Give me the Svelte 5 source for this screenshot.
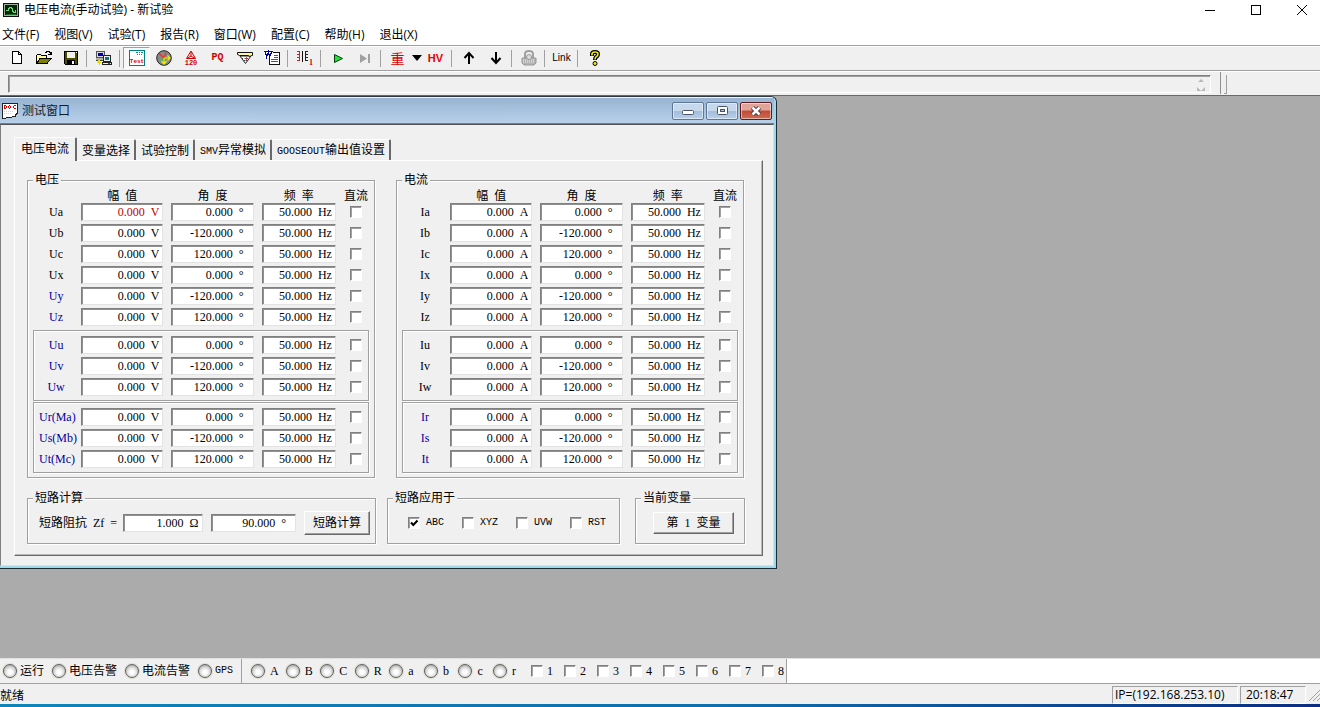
<script>
  const menus = ['文件(F)', '视图(V)', '试验(T)', '报告(R)', '窗口(W)', '配置(C)', '帮助(H)', '退出(X)'];
  const tabs = [
    { latin: '', text: '电压电流' },
    { latin: '', text: '变量选择' },
    { latin: '', text: '试验控制' },
    { latin: 'SMV', text: '异常模拟' },
    { latin: 'GOOSEOUT', text: '输出值设置' }
  ];
  const angles = ['0.000', '-120.000', '120.000'];
  const sp = '\u2002';

  function channels(names, unit, blueNames) {
    return names.map((name, i) => ({
      name,
      unit,
      angle: angles[i % 3],
      blue: blueNames.includes(name)
    }));
  }

  const panels = [
    {
      title: '电压',
      groups: [
        ['Ua', 'Ub', 'Uc', 'Ux', 'Uy', 'Uz'],
        ['Uu', 'Uv', 'Uw'],
        ['Ur(Ma)', 'Us(Mb)', 'Ut(Mc)']
      ].map((g) => channels(g, 'V', ['Uy', 'Uz', 'Uu', 'Uv', 'Uw', 'Ur(Ma)', 'Us(Mb)', 'Ut(Mc)']))
    },
    {
      title: '电流',
      groups: [
        ['Ia', 'Ib', 'Ic', 'Ix', 'Iy', 'Iz'],
        ['Iu', 'Iv', 'Iw'],
        ['Ir', 'Is', 'It']
      ].map((g) => channels(g, 'A', ['Ir', 'Is', 'It']))
    }
  ];

  const applied = [
    { name: 'ABC', on: true },
    { name: 'XYZ', on: false },
    { name: 'UVW', on: false },
    { name: 'RST', on: false }
  ];
  const alarms = ['运行', '电压告警', '电流告警', 'GPS'];
  const phases = ['A', 'B', 'C', 'R', 'a', 'b', 'c', 'r'];
  const inputs = [1, 2, 3, 4, 5, 6, 7, 8];
</script>

<div class="app">
  <header class="titlebar">
    <svg class="logo" viewBox="0 0 16 16" shape-rendering="crispEdges" aria-hidden="true">
      <rect x="0" y="1" width="16" height="14" rx="1" fill="#111" />
      <rect x="1" y="2" width="14" height="12" fill="#9fb09f" />
      <rect x="2" y="3" width="12" height="10" fill="#06240a" />
      <path d="M3 8h2V6h1V5h2v1h1v3h1v1h2V8h1" fill="none" stroke="#5be070" />
      <path d="M3 12h10" stroke="#1d6b2a" />
    </svg>
    <span class="caption">电压电流(手动试验) - 新试验</span>
    <div class="winbtns">
      <button aria-label="最小化"><svg viewBox="0 0 12 12" shape-rendering="crispEdges"><path d="M1 6.500h10" stroke="#000" /></svg></button>
      <button aria-label="最大化"><svg viewBox="0 0 12 12" shape-rendering="crispEdges"><rect x="1.500" y="1.500" width="9" height="9" fill="none" stroke="#000" /></svg></button>
      <button aria-label="关闭"><svg viewBox="0 0 12 12"><path d="M1 1l10 10M11 1L1 11" stroke="#000" /></svg></button>
    </div>
  </header>

  <nav class="menu">
    {#each menus as m}<button>{m}</button>{/each}
  </nav>

  <div class="toolbar">
    <button aria-label="新建">
      <svg viewBox="0 0 16 16" shape-rendering="crispEdges"><path d="M3.500 1.500h6l3 3v9h-9z" fill="#fff" stroke="#000" /><path d="M9.500 1.500v3h3" fill="none" stroke="#000" /></svg>
    </button>
    <button aria-label="打开">
      <svg viewBox="0 0 16 16" shape-rendering="crispEdges"><path d="M.5 13.500v-8l1-1h3l1 1h5v3h-6z" fill="#ffff9a" stroke="#000" /><path d="M1 13.500l3-5h11l-4 5z" fill="#808000" stroke="#000" /><path d="M9 2.500h1v-1h3v1h1v2M12 4.500h3M15.500 2v3" fill="none" stroke="#000" /></svg>
    </button>
    <button aria-label="保存">
      <svg viewBox="0 0 16 16" shape-rendering="crispEdges"><path d="M1.500 1.500h13v13h-12l-1-1z" fill="#4d4d00" stroke="#000" /><path d="M4 2h8v6H4z" fill="#f0f0f0" /><path d="M4 10h8v4H4z" fill="#000" /><path d="M9 11h2v3H9zM13 2h1v1h-1z" fill="#fff" /></svg>
    </button>
    <i class="sep"></i>
    <button aria-label="联机">
      <svg viewBox="0 0 16 16" shape-rendering="crispEdges"><path d="M.5 1.500h8v6h-8z" fill="#d8d8d8" stroke="#555" /><path d="M2 3h5v3H2z" fill="#0000a8" /><path d="M0 8h8v2H0z" fill="#b0b0b0" /><path d="M0 10h7v1H0z" fill="#444" /><path d="M7.500 5.500h7v6h-7z" fill="#f0f0f0" stroke="#222" /><path d="M9 7h4v3H9z" fill="#007c80" /><path d="M6.500 12.500h9v2h-9z" fill="#eee" stroke="#222" /><path d="M12 13h2v1h-2z" fill="#008000" /><path d="M2 10h2v2h1v1H4v2H3v-2H1v-1h1z" fill="#e4dc00" /></svg>
    </button>
    <i class="sep"></i>
    <button class="pressed" aria-label="测试">
      <svg class="wide" viewBox="0 0 18 16"><path d="M1.500.500h15v15h-15z" fill="#fff" stroke="#008080" shape-rendering="crispEdges" /><path d="M8 2.500h2M11 2.500h1M13 2.500h2M9 4.500h1M11 4.500h1M13 4.500h1" stroke="#0090a0" shape-rendering="crispEdges" /><text x="9" y="13" text-anchor="middle" font-family="Liberation Mono" font-size="6" font-weight="700" fill="#e00000">Test</text></svg>
    </button>
    <button aria-label="矢量图">
      <svg viewBox="0 0 16 16"><circle cx="8" cy="8" r="7.300" fill="#888" stroke="#222" /><path d="M8 8L3 3.500M8 8l2-5.500" stroke="#f03030" stroke-width="1.400" fill="none" /><path d="M8 8v6M8 8h6M11.500 5.500L14 8l-2.500 2.500M5.500 11L8 14l2.500-3" stroke="#e8f000" stroke-width="1.200" fill="none" /><path d="M8 8l-5 3" stroke="#30d030" /></svg>
    </button>
    <button aria-label="120度">
      <svg viewBox="0 0 16 16"><path d="M8 1L3.500 8.500h9zM8 2v4M8 6L4 8.500M8 6l4 2.500" fill="none" stroke="#d00000" /><text x="8" y="15" text-anchor="middle" font-family="Liberation Mono" font-size="7" font-weight="700" fill="#d00000">120</text></svg>
    </button>
    <button aria-label="功率"><span class="pq">PQ</span></button>
    <button aria-label="阻抗图">
      <svg viewBox="0 0 16 16"><path d="M3 6l5.500 7.500L14 6z" fill="#fff" stroke="#222" /><path d="M.5 2.500h15v3h-1l-1.500 1-2-1H2.500L.5 4.500z" fill="#fff7a0" stroke="#111" /><path d="M5 8.500h2M8 8v3M10 8.500h2M7 10.500h3" stroke="#444" stroke-dasharray="1 1" /><path d="M9.500 7v3M8 8.500h3" stroke="#d02020" stroke-width=".8" /></svg>
    </button>
    <button aria-label="导出Word">
      <svg viewBox="0 0 16 16" shape-rendering="crispEdges"><path d="M5.500 2.500h10v12h-10z" fill="#fff" stroke="#111" /><path d="M10 5.500h4M10 7.500h4M7 9.500h7M7 11.500h7" stroke="#555" /><path d="M0 0h9v8H0z" fill="#fff" /><path d="M0 1.500h9" stroke="#000098" /><path d="M1.500 2l1 5 2-5 1 5 2-5" fill="none" stroke="#000098" stroke-width="1.200" /></svg>
    </button>
    <i class="sep"></i>
    <button aria-label="变比">
      <svg viewBox="0 0 18 16" class="wide" shape-rendering="crispEdges"><path d="M1 1.500h3M3.500 2v2M1 4.500h3M3.500 5v2M1 7.500h3M3.500 8v2M1 10.500h3" fill="none" stroke="#d02020" /><path d="M6.500 1v11" stroke="#111" /><path d="M9 1.500h3M9.500 2v2M9 4.500h3M9.500 5v2M9 7.500h3M9.500 8v2M9 10.500h3" fill="none" stroke="#222" /><text x="13" y="15" font-family="Liberation Serif" font-size="8" font-weight="700" fill="#d00000">1</text></svg>
    </button>
    <i class="sep"></i>
    <button aria-label="开始试验">
      <svg viewBox="0 0 16 16"><path d="M4.500 4.500v8l8-4z" fill="#22e03a" stroke="#063c0a" /></svg>
    </button>
    <button aria-label="单步" disabled>
      <svg viewBox="0 0 16 16"><path d="M3 4v9l7-4.500zM11 4h2v9h-2z" fill="#a0a0a0" /></svg>
    </button>
    <i class="sep"></i>
    <button class="red" aria-label="重复">重</button>
    <button class="drop" aria-label="更多">
      <svg viewBox="0 0 10 6"><path d="M0 0h10L5 6z" fill="#000" /></svg>
    </button>
    <button class="hv" aria-label="高压">HV</button>
    <i class="sep"></i>
    <button aria-label="上移">
      <svg viewBox="0 0 16 16"><path d="M8 14V4M3.500 8L8 3l4.500 5" fill="none" stroke="#000" stroke-width="2" /></svg>
    </button>
    <button aria-label="下移">
      <svg viewBox="0 0 16 16"><path d="M8 2v10M3.500 8L8 13l4.500-5" fill="none" stroke="#000" stroke-width="2" /></svg>
    </button>
    <i class="sep"></i>
    <button aria-label="锁定" disabled>
      <svg viewBox="0 0 16 16"><path d="M4 8V4q0-3 4-3t4 3v4" fill="none" stroke="#a0a0a0" stroke-width="2" /><path d="M1 8h14v5l-2 2H3l-2-2z" fill="#b4b4b4" stroke="#999" /><path d="M2 10h12M2 12h12" stroke="#eee" stroke-dasharray="1 1" /><circle cx="8" cy="7" r="2.500" fill="#ddd" stroke="#999" /></svg>
    </button>
    <i class="sep"></i>
    <button class="link">Link</button>
    <i class="sep"></i>
    <button aria-label="帮助">
      <svg viewBox="0 0 16 16"><path d="M5 6V4q0-2 3-2t3 2q0 2-2 3-1 1-1 3" fill="none" stroke="#000" stroke-width="4" /><path d="M5 5.500V4q0-2 3-2t3 2q0 2-2 3-1 1-1 2.500" fill="none" stroke="#f4ee00" stroke-width="1.600" /><circle cx="8" cy="13.500" r="2" fill="#f4ee00" stroke="#000" /></svg>
    </button>
  </div>

  <div class="rebar">
    <div class="message">
      <svg viewBox="0 0 10 14" aria-hidden="true"><path d="M2 4h6L5 1zM1 9l4 4 4-4v4H1z" fill="#b8b8b8" /></svg>
    </div>
    <i class="gripline"></i>
    <i class="grip"></i>
  </div>

  <main class="desktop">
    <section class="window">
      <header class="wintitle">
        <svg class="doc" viewBox="0 0 16 16" shape-rendering="crispEdges" aria-hidden="true">
          <path d="M.5.500h15v10l-2 1v2h-3l-1 1h-5l-1 1h-3z" fill="#fff" stroke="#222" />
          <path d="M2.500 2v4M3 2.500h1M4.500 3v2M3 5.500h1M6.500 3v2M7 2.500h1M7 5.500h1M8.500 3v2M11.500 3v2M12 2.500h2M12 5.500h2" stroke="#e00000" />
          <path d="M2 8.500h10M2 10.500h8" stroke="#ccc" stroke-dasharray="1 1" />
        </svg>
        <span>测试窗口</span>
        <div class="mdibtns">
          <button aria-label="最小化窗口"><svg viewBox="0 0 14 12"><rect x="1.500" y="5.500" width="11" height="4" rx="1" fill="#fff" stroke="#4c5566" /></svg></button>
          <button aria-label="最大化窗口"><svg viewBox="0 0 14 12"><rect x="2.500" y="1.500" width="10" height="8" rx="1" fill="#fff" stroke="#4c5566" /><rect x="5.500" y="4.500" width="4" height="2" fill="#a8c0dc" stroke="#4c5566" /></svg></button>
          <button class="close" aria-label="关闭窗口"><svg viewBox="0 0 14 12"><path d="M3.500 2.500l7 7M10.500 2.500l-7 7" stroke="#4a3038" stroke-width="4.500" /><path d="M3.500 2.500l7 7M10.500 2.500l-7 7" stroke="#fff" stroke-width="2.500" /></svg></button>
        </div>
      </header>

      <div class="winbody">
        <div class="tabs" role="tablist">
          {#each tabs as t, i}
            <button role="tab" aria-selected={i === 0} class:active={i === 0}>{#if t.latin}<span class="latin">{t.latin}</span>{/if}{t.text}</button>
          {/each}
        </div>

        <div class="sheet">
          <div class="quantities">
            {#each panels as p}
              <fieldset>
                <legend>{p.title}</legend>
                <div class="row head">
                  <span></span><span>幅&nbsp; 值</span><span>角&nbsp; 度</span><span>频&nbsp; 率</span><span>直流</span>
                </div>
                {#each p.groups as g, gi}
                  <div class="group" class:boxed={gi > 0}>
                    {#each g as c}
                      <div class="row">
                        <label for="{c.name}-amp" class:blue={c.blue}>{c.name}</label>
                        <input id="{c.name}-amp" class:alert={c.name === 'Ua'} value={'0.000' + sp + c.unit} />
                        <input class="deg" aria-label="{c.name} 角度" value={c.angle + sp + '°'} />
                        <input aria-label="{c.name} 频率" value={'50.000' + sp + 'Hz'} />
                        <input type="checkbox" aria-label="{c.name} 直流" />
                      </div>
                    {/each}
                  </div>
                {/each}
              </fieldset>
            {/each}
          </div>

          <div class="extras">
            <fieldset class="calc">
              <legend>短路计算</legend>
              <div class="line">
                <label for="zf">短路阻抗{sp}Zf{sp}=</label>
                <input id="zf" value={'1.000' + sp + 'Ω'} />
                <input class="deg" aria-label="阻抗角" value={'90.000' + sp + '°'} />
                <button class="push">短路计算</button>
              </div>
            </fieldset>
            <fieldset class="apply">
              <legend>短路应用于</legend>
              <div class="line">
                {#each applied as a}
                  <label><input type="checkbox" checked={a.on} /><span class="latin">{a.name}</span></label>
                {/each}
              </div>
            </fieldset>
            <fieldset class="current">
              <legend>当前变量</legend>
              <div class="line"><button class="push">第{sp}1{sp}变量</button></div>
            </fieldset>
          </div>
        </div>
      </div>
    </section>
  </main>

  <div class="indicators">
    <div class="strip alarms">
      {#each alarms as a}<span class="led"><i></i><span class:latin={a === 'GPS'}>{a}</span></span>{/each}
    </div>
    <div class="strip phases">
      {#each phases as p}<span class="led"><i></i>{p}</span>{/each}
    </div>
    <div class="strip digital">
      {#each inputs as n}<label><input type="checkbox" />{n}</label>{/each}
    </div>
  </div>

  <footer class="status">
    <span class="ready">就绪</span>
    <span class="cell ip">IP=(192.168.253.10)</span>
    <span class="cell clock">20:18:47</span>
    <svg viewBox="0 0 12 12" aria-hidden="true"><path d="M1 12L12 1M5 12l7-7M9 12l3-3" stroke="#a0a0a0" /></svg>
  </footer>
</div>

<style>
  :global(body) {
    margin: 0;
    background: #f0f0f0;
  }
  .app {
    display: flex;
    flex-direction: column;
    height: 100vh;
    overflow: hidden;
    color: #000;
    background: #f0f0f0;
    font: 12px/16px 'Liberation Serif', 'Noto Sans CJK SC', serif;
  }
  button {
    margin: 0;
    padding: 0;
    border: 0;
    background: none;
    color: inherit;
    font: inherit;
  }
  svg {
    display: block;
    flex: none;
  }
  .latin {
    font-family: 'Liberation Mono', monospace;
    font-size: 10px;
  }

  .titlebar,
  .menu,
  .status {
    font-family: 'Open Sans', 'Noto Sans CJK SC', sans-serif;
  }
  .titlebar {
    display: flex;
    align-items: center;
    height: 20px;
    padding-left: 3px;
    background: #fff;
  }
  .logo {
    width: 16px;
    height: 16px;
  }
  .caption {
    margin-left: 5px;
  }
  .winbtns {
    display: flex;
    gap: 10px;
    margin-left: auto;
  }
  .winbtns button {
    display: grid;
    place-items: center;
    width: 36px;
    height: 20px;
  }
  .winbtns svg {
    width: 12px;
    height: 12px;
  }
  .menu {
    display: flex;
    align-items: center;
    gap: 15px;
    height: 25px;
    padding: 4px 2px 0;
    box-sizing: border-box;
    background: #fff;
  }

  .toolbar {
    display: flex;
    align-items: center;
    height: 25px;
    padding-left: 3px;
    box-sizing: border-box;
    border-top: 1px solid #a0a0a0;
    box-shadow: inset 0 1px #fff;
  }
  .toolbar button {
    display: grid;
    place-items: center;
    width: 27px;
    height: 22px;
  }
  .toolbar svg {
    width: 16px;
    height: 16px;
  }
  .toolbar svg.wide {
    width: 18px;
  }
  .toolbar .sep {
    width: 1px;
    height: 17px;
    margin: 0 3px 0 2px;
    background: #a0a0a0;
  }
  .toolbar .pressed {
    box-sizing: border-box;
    border: 1px solid;
    border-color: #a0a0a0 #fff #fff #a0a0a0;
    background: #f8f8f8;
  }
  .pq {
    color: #d00000;
    font: bold 10px/16px 'Liberation Mono', monospace;
  }
  .toolbar .red {
    color: #e00000;
    font: 14px/20px 'Noto Sans CJK SC', sans-serif;
  }
  .toolbar .drop {
    width: 11px;
  }
  .toolbar .drop svg {
    width: 10px;
    height: 6px;
  }
  .toolbar .hv {
    color: #e80000;
    font: bold 11px/16px 'Liberation Sans', sans-serif;
  }
  .toolbar .link {
    font: 10px/16px 'Liberation Sans', sans-serif;
  }

  .rebar {
    display: flex;
    height: 26px;
    box-sizing: border-box;
    padding: 4px 0 2px 8px;
    border-top: 1px solid #a0a0a0;
    border-bottom: 1px solid #696969;
    box-shadow: inset 0 1px #fff;
  }
  .message {
    display: flex;
    flex: 1;
    justify-content: flex-end;
    align-items: flex-end;
    height: 18px;
    box-sizing: border-box;
    border: 1px solid;
    border-color: #808080 #fff #fff #808080;
    box-shadow: inset 1px 1px #a0a0a0;
    padding-right: 4px;
  }
  .message svg {
    width: 10px;
    height: 14px;
  }
  .gripline {
    width: 1px;
    margin: -3px 0 -1px 9px;
    background: #909090;
  }
  .grip {
    width: 2px;
    height: 18px;
    margin: 0 93px 0 3px;
    border-right: 1px solid #a0a0a0;
    border-bottom: 1px solid #a0a0a0;
  }

  .desktop {
    position: relative;
    flex: 1;
    min-height: 0;
    background: #ababab;
  }
  .window {
    position: absolute;
    left: -1px;
    top: 0;
    width: 778px;
    box-sizing: border-box;
    border: 1px solid #1a2a30;
    border-top-color: #303a44;
    border-radius: 0 6px 0 0;
    background: #9fd8ea;
    padding: 1px 2px 2px 0;
    box-shadow: inset 0 1px #eef6fc;
  }
  .wintitle {
    display: flex;
    align-items: center;
    height: 26px;
    box-sizing: border-box;
    padding: 0 2px;
    border-bottom: 1px solid #747c86;
    background: linear-gradient(#98b4d2, #b8d0ea);
    color: #101c2c;
  }
  .wintitle span {
    margin-left: 4px;
  }
  .doc {
    width: 16px;
    height: 16px;
  }
  .mdibtns {
    display: flex;
    gap: 2px;
    margin-left: auto;
  }
  .mdibtns button {
    display: grid;
    place-items: center;
    width: 32px;
    height: 18px;
    box-sizing: border-box;
    border: 1px solid #5d7696;
    border-radius: 2px;
    box-shadow: inset 0 0 0 1px #ffffff80;
    background: linear-gradient(#c6d8ec 0 48%, #a2bcda 50%, #b8d0ea);
  }
  .mdibtns .close {
    border-color: #5c1c20;
    background: linear-gradient(#e0a498 0 44%, #c04a38 50%, #cc6c50);
  }
  .mdibtns svg {
    width: 14px;
    height: 12px;
  }
  .winbody {
    padding: 12px 10px 9px 13px;
    border: 1px solid;
    border-color: #555 #e0e0e0 #e0e0e0 #808080;
    background: #f0f0f0;
  }
  .tabs {
    display: flex;
    align-items: flex-end;
    height: 23px;
  }
  .tabs button {
    height: 21px;
    padding: 1px 4px 0 5px;
    border-top: 1px solid #fff;
    border-right: 2px solid #696969;
    border-radius: 2px 2px 0 0;
    line-height: 16px;
    white-space: nowrap;
  }
  .tabs .active {
    position: relative;
    height: 24px;
    margin-bottom: -1px;
    padding: 0 6px 1px;
    border-left: 1px solid #fff;
    background: #f0f0f0;
  }
  .sheet {
    padding: 11px 18px 11px 12px;
    border: 1px solid;
    border-color: #fff #696969 #696969 #fff;
    box-shadow: inset -1px -1px #b8b8b8;
  }
  .quantities {
    display: flex;
    gap: 21px;
  }
  fieldset {
    min-width: 0;
    margin: 0;
    padding: 0 5px 4px;
    border: 1px solid #a0a0a0;
    box-shadow: 1px 1px #fff, inset 1px 1px #fff;
  }
  .quantities fieldset {
    flex: 1;
  }
  legend {
    height: 16px;
    padding: 0 2px;
    background: #f0f0f0;
  }
  .row {
    display: grid;
    grid-template-columns: 39fr 82fr 82fr 74fr 24fr;
    column-gap: 8px;
    align-items: center;
    height: 21px;
  }
  .head {
    height: 13px;
    padding: 0 1px;
    text-align: center;
    white-space: nowrap;
  }
  .row label {
    min-width: 0;
    padding-left: 5px;
    text-align: center;
    white-space: nowrap;
  }
  .row > * {
    min-width: 0;
  }
  .blue {
    color: #0000a0;
  }
  .group {
    padding: 0 1px 3px;
  }
  .boxed {
    margin-bottom: 1px;
    padding: 3px 0;
    border: 1px solid #a0a0a0;
    box-shadow: 1px 1px #fff, inset 1px 1px #fff;
  }
  .boxed:last-child {
    margin-bottom: 0;
  }
  input:not([type='checkbox']) {
    width: 100%;
    min-width: 0;
    height: 18px;
    margin: 0;
    padding: 1px 3px 0;
    box-sizing: border-box;
    border: 1px solid;
    border-color: #808080 #e3e3e3 #e3e3e3 #808080;
    border-radius: 0;
    box-shadow: inset 1px 1px #909090;
    background: #fff;
    color: inherit;
    font: inherit;
    text-align: right;
  }
  input.deg:not([type='checkbox']) {
    padding-right: 9px;
  }
  input.alert:not([type='checkbox']) {
    color: #c00000;
  }
  input[type='checkbox'] {
    appearance: none;
    flex: none;
    width: 12px;
    height: 12px;
    margin: 0;
    border: 1px solid;
    border-color: #808080 #fff #fff #808080;
    box-shadow: inset 1px 1px #a0a0a0;
    background: #fff;
  }
  input[type='checkbox']:checked {
    background: #fff url("data:image/svg+xml,%3Csvg xmlns='http://www.w3.org/2000/svg' viewBox='0 0 10 10'%3E%3Cpath d='M2 4.500l2.300 2.500L8.500 2.500' fill='none' stroke='%23000' stroke-width='2'/%3E%3C/svg%3E") center / 10px 10px no-repeat;
  }
  .row input[type='checkbox'] {
    justify-self: center;
  }

  .extras {
    display: grid;
    grid-template-columns: 349fr 233fr 114fr;
    column-gap: 11px;
    margin: 12px -1px 0 0;
  }
  .line {
    display: flex;
    align-items: center;
    height: 33px;
  }
  .calc .line {
    gap: 8px;
    padding-left: 6px;
  }
  .calc .line input {
    flex: 1 1 0;
    width: 0;
  }
  .calc label {
    flex: none;
    width: 76px;
    white-space: nowrap;
  }
  .calc .push {
    flex: none;
    width: 66px;
  }
  .push {
    height: 24px;
    box-sizing: border-box;
    border: 1px solid;
    border-color: #fff #696969 #696969 #fff;
    box-shadow: inset -1px -1px #a0a0a0;
    white-space: nowrap;
  }
  .apply .line {
    justify-content: space-between;
    padding: 0 8px 0 15px;
  }
  .apply label,
  .digital label {
    display: flex;
    align-items: center;
    gap: 6px;
  }
  .current {
    margin-left: 4px;
  }
  .current .line {
    padding: 0 5px 0 12px;
  }
  .current .push {
    flex: 1;
    height: 22px;
  }

  .indicators {
    display: flex;
    height: 26px;
    box-sizing: border-box;
    border-top: 1px solid #e0e0e0;
    border-bottom: 1px solid #a0a0a0;
    background: #fff;
  }
  .strip {
    display: flex;
    align-items: center;
    background: #f0f0f0;
  }
  .alarms {
    gap: 7px;
    padding: 0 8px 0 2px;
    border-right: 1px solid #a0a0a0;
  }
  .phases {
    justify-content: space-between;
    width: 276px;
    padding-left: 8px;
  }
  .digital {
    padding-left: 5px;
    border-right: 1px solid #a0a0a0;
  }
  .digital label {
    width: 33px;
    gap: 4px;
  }
  .digital label:last-child {
    width: 24px;
  }
  .led {
    display: flex;
    align-items: center;
    gap: 2px;
  }
  .phases .led {
    width: 34px;
    gap: 4px;
  }
  .led i {
    width: 12px;
    height: 12px;
    margin: 0 1px;
    border: 1px solid #606060;
    border-radius: 50%;
    background: radial-gradient(circle at 50% 60%, #fff 0 20%, #dcdcdc 50%, #8c8c8c 100%);
    box-shadow: 0 0 0 1px #dedecf;
  }

  .status {
    display: flex;
    align-items: center;
    height: 23px;
    box-sizing: border-box;
    padding: 2px 0 0;
    border-bottom: 3px solid;
    border-image: linear-gradient(90deg, #0a86bd, #0d6fb0 55%, #0b2d83) 0 0 3 0;
  }
  .ready {
    flex: 1;
    padding-top: 2px;
  }
  .cell {
    height: 18px;
    box-sizing: border-box;
    border: 1px solid;
    border-color: #a0a0a0 #fff #fff #a0a0a0;
    line-height: 16px;
    white-space: nowrap;
  }
  .ip {
    width: 126px;
    padding-left: 2px;
    margin-right: 2px;
  }
  .clock {
    width: 66px;
    padding-left: 5px;
  }
  .status svg {
    width: 12px;
    height: 12px;
    margin-left: 2px;
  }
</style>
